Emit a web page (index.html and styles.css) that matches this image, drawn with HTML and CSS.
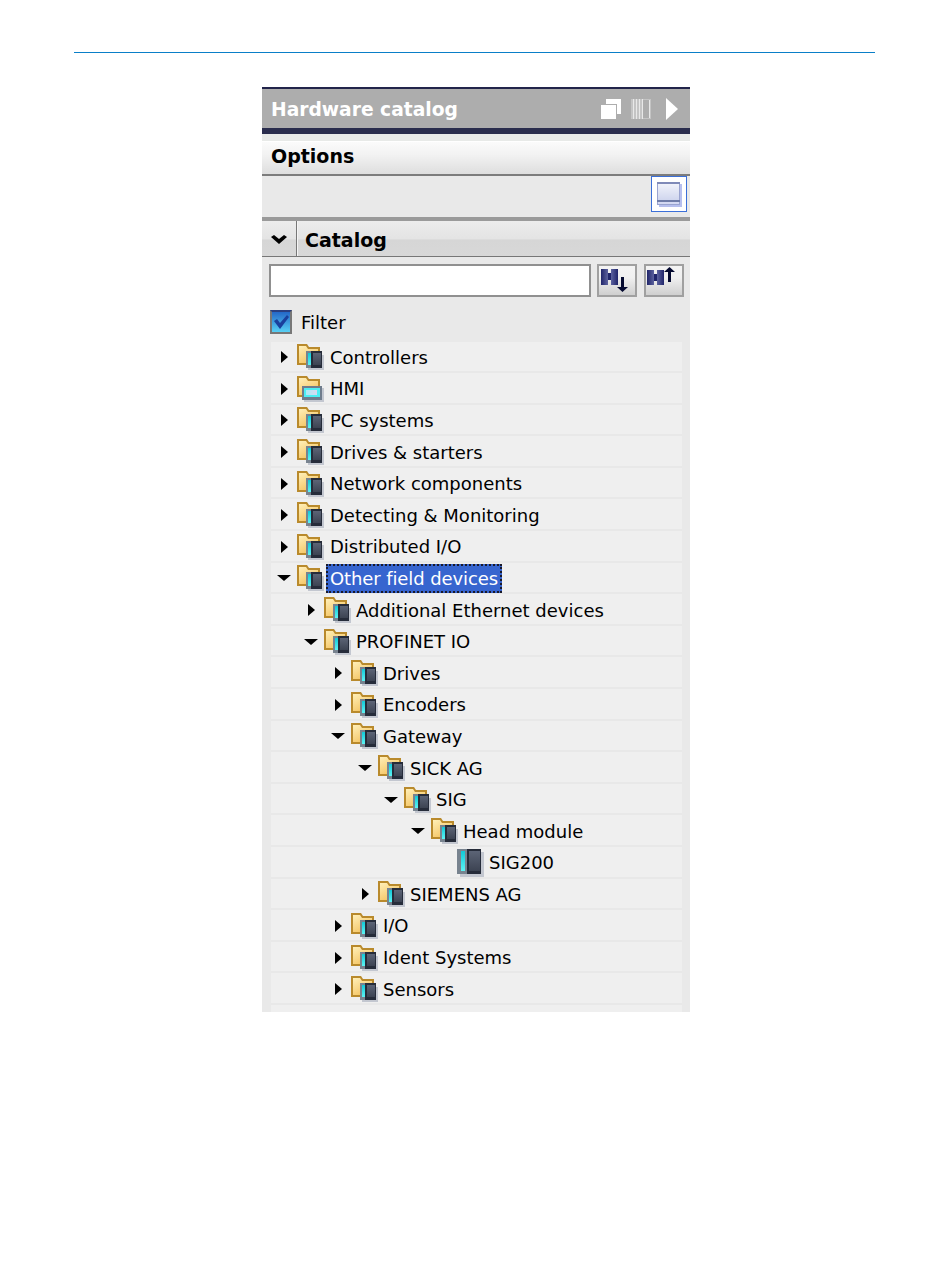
FILE: index.html
```html
<!DOCTYPE html>
<html>
  <head>
    <meta charset="utf-8">
    <title>Hardware catalog</title>
    <link rel="stylesheet" href="styles.css">
  </head>
  <body>
    <!-- Shared icons -->
    <svg class="defs" xmlns="http://www.w3.org/2000/svg">
      <defs>
        <linearGradient id="folderfill" x1="0" y1="0" x2="0.6" y2="1">
          <stop offset="0" stop-color="#ffefb8"/>
          <stop offset="1" stop-color="#f4c462"/>
        </linearGradient>
        <linearGradient id="cyan" x1="0" y1="0" x2="0" y2="1">
          <stop offset="0" stop-color="#12c8d8"/>
          <stop offset="1" stop-color="#5cf4f4"/>
        </linearGradient>
        <linearGradient id="module" x1="0" y1="0" x2="0" y2="1">
          <stop offset="0" stop-color="#5c6476"/>
          <stop offset="1" stop-color="#3c4352"/>
        </linearGradient>
        <linearGradient id="screen" x1="0" y1="0" x2="1" y2="0">
          <stop offset="0" stop-color="#a8ecf8"/>
          <stop offset="1" stop-color="#d8d8f0"/>
        </linearGradient>
        <linearGradient id="pane" x1="0" y1="0" x2="0" y2="1">
          <stop offset="0" stop-color="#f0f2fa"/>
          <stop offset="1" stop-color="#d0d6ee"/>
        </linearGradient>
        <linearGradient id="binoc" x1="0" y1="0" x2="1" y2="0">
          <stop offset="0" stop-color="#20256a"/>
          <stop offset="0.5" stop-color="#6a70aa"/>
          <stop offset="1" stop-color="#20256a"/>
        </linearGradient>
        <symbol id="arrow-right" viewBox="0 0 14 14">
          <path d="M4 1l7 6-7 6z" fill="#000"/>
        </symbol>
        <symbol id="arrow-down" viewBox="0 0 14 14">
          <path d="M0 4h14l-7 6z" fill="#000"/>
        </symbol>
        <symbol id="folder" viewBox="0 0 27 26">
          <path d="M0 0h10l2 3h11v16H9v2H0z" fill="#b98a2c"/>
          <path d="M2 2h7l2 3h10v14H2z" fill="url(#folderfill)"/>
        </symbol>
        <symbol id="folder-device" viewBox="0 0 27 26">
          <use href="#folder"/>
          <path d="M11 11h16v15H11z" fill="#c3c7d0"/>
          <path d="M9 7h6v17H9z" fill="#78838f"/>
          <path d="M11 9h3v12h-3z" fill="url(#cyan)"/>
          <path d="M14 7h11v17H14z" fill="#262c3a"/>
          <path d="M16 9h8v12h-8z" fill="url(#module)"/>
        </symbol>
        <symbol id="folder-hmi" viewBox="0 0 27 26">
          <use href="#folder"/>
          <path d="M7 12h20v14H7z" fill="#c3c7d0"/>
          <path d="M5 10h20v14H5z" fill="#6f7c8c"/>
          <path d="M7 12h16v9H7z" fill="#4ceef4"/>
          <path d="M9 14h11v5H9z" fill="url(#screen)"/>
        </symbol>
        <symbol id="device" viewBox="0 0 27 28">
          <path d="M3 3h24v25H3z" fill="#c3c7d0"/>
          <path d="M0 0h10v25H0z" fill="#78838f"/>
          <path d="M4 2h4v20H4z" fill="url(#cyan)"/>
          <path d="M10 0h14v25H10z" fill="#262c3a"/>
          <path d="M12 2h11v20H12z" fill="url(#module)"/>
        </symbol>
      </defs>
    </svg>

    <div class="topline"></div>

    <div class="panel">
      <div class="titlebar">
        <span class="title">Hardware catalog</span>
        <svg class="ticon" width="20" height="20" viewBox="0 0 20 20">
          <path d="M5 0h15v15h-4V5H5z" fill="#fff"/>
          <path d="M0 6h15v14H0z" fill="#fff"/>
        </svg>
        <svg class="ticon" width="20" height="20" viewBox="0 0 20 20">
          <path d="M0 0h20v20H0z" fill="#c4c4c4"/>
          <path d="M2 0h1v20H2zM5 0h1v20H5zM8 0h1v20H8zM11 0h1v20h-1zM18 1h1v18h-1z" fill="#e8e8e8"/>
          <path d="M12 1h6v18h-6z" fill="#adadad"/>
        </svg>
        <svg class="tarrow" width="12" height="22" viewBox="0 0 12 22">
          <path d="M0 0l12 11L0 22z" fill="#fff"/>
        </svg>
      </div>
      <div class="strip"></div>

      <div class="section-head">Options</div>
      <div class="toolbar">
        <div class="toolbtn">
          <svg width="25" height="25" viewBox="0 0 25 25">
            <path d="M2 2h23v23H2z" fill="#b6bfee"/>
            <path d="M0 0h23v23H0z" fill="#9aa4d0"/>
            <path d="M1 2h21v16H1z" fill="url(#pane)"/>
            <path d="M0 0h23v2H0z" fill="#7f8ab8"/>
            <path d="M0 18h23v2H0z" fill="#6f7ca8"/>
            <path d="M1 20h21v2H1z" fill="#d4d9f2"/>
          </svg>
        </div>
      </div>

      <div class="catalog-head">
        <div class="collapse">
          <svg width="16" height="9" viewBox="0 0 16 9">
            <path d="M0 2l3-2 5 4 5-4 3 2-8 7z" fill="#000"/>
          </svg>
        </div>
        <span class="catalog-title">Catalog</span>
      </div>

      <div class="search">
        <div class="search-input"></div>
        <div class="search-btn">
          <svg width="36" height="29" viewBox="0 0 36 29">
            <path d="M2 3h7v16H2zM12 3h7v16h-7z" fill="url(#binoc)"/>
            <path d="M9 7h3v7H9z" fill="#20256a"/>
            <path d="M22 11h3v10h4l-5.500 5-5.500-5h4z" fill="#050a30"/>
          </svg>
        </div>
        <div class="search-btn">
          <svg width="36" height="29" viewBox="0 0 36 29">
            <path d="M1 4h7v15H1zM11 4h7v15h-7z" fill="url(#binoc)"/>
            <path d="M8 8h3v7H8z" fill="#20256a"/>
            <path d="M22 16h3V6h4l-5.500-5-5.500 5h4z" fill="#050a30"/>
          </svg>
        </div>
      </div>

      <div class="filter">
        <div class="checkbox">
          <svg width="16" height="14" viewBox="0 0 16 14">
            <path d="M1 6l3-2 3 4 7-8 2 2-9 12z" fill="#1a3f9c"/>
          </svg>
        </div>
        <span>Filter</span>
      </div>

      <div class="tree">
        <div class="row d0"><svg class="arrow"><use href="#arrow-right"/></svg><svg class="icon"><use href="#folder-device"/></svg><span class="label">Controllers</span></div>
        <div class="row d0"><svg class="arrow"><use href="#arrow-right"/></svg><svg class="icon"><use href="#folder-hmi"/></svg><span class="label">HMI</span></div>
        <div class="row d0"><svg class="arrow"><use href="#arrow-right"/></svg><svg class="icon"><use href="#folder-device"/></svg><span class="label">PC systems</span></div>
        <div class="row d0"><svg class="arrow"><use href="#arrow-right"/></svg><svg class="icon"><use href="#folder-device"/></svg><span class="label">Drives &amp; starters</span></div>
        <div class="row d0"><svg class="arrow"><use href="#arrow-right"/></svg><svg class="icon"><use href="#folder-device"/></svg><span class="label">Network components</span></div>
        <div class="row d0"><svg class="arrow"><use href="#arrow-right"/></svg><svg class="icon"><use href="#folder-device"/></svg><span class="label">Detecting &amp; Monitoring</span></div>
        <div class="row d0"><svg class="arrow"><use href="#arrow-right"/></svg><svg class="icon"><use href="#folder-device"/></svg><span class="label">Distributed I/O</span></div>
        <div class="row d0"><svg class="arrow"><use href="#arrow-down"/></svg><svg class="icon"><use href="#folder-device"/></svg><span class="label selected">Other field devices</span></div>
        <div class="row d1"><svg class="arrow"><use href="#arrow-right"/></svg><svg class="icon"><use href="#folder-device"/></svg><span class="label">Additional Ethernet devices</span></div>
        <div class="row d1"><svg class="arrow"><use href="#arrow-down"/></svg><svg class="icon"><use href="#folder-device"/></svg><span class="label">PROFINET IO</span></div>
        <div class="row d2"><svg class="arrow"><use href="#arrow-right"/></svg><svg class="icon"><use href="#folder-device"/></svg><span class="label">Drives</span></div>
        <div class="row d2"><svg class="arrow"><use href="#arrow-right"/></svg><svg class="icon"><use href="#folder-device"/></svg><span class="label">Encoders</span></div>
        <div class="row d2"><svg class="arrow"><use href="#arrow-down"/></svg><svg class="icon"><use href="#folder-device"/></svg><span class="label">Gateway</span></div>
        <div class="row d3"><svg class="arrow"><use href="#arrow-down"/></svg><svg class="icon"><use href="#folder-device"/></svg><span class="label">SICK AG</span></div>
        <div class="row d4"><svg class="arrow"><use href="#arrow-down"/></svg><svg class="icon"><use href="#folder-device"/></svg><span class="label">SIG</span></div>
        <div class="row d5"><svg class="arrow"><use href="#arrow-down"/></svg><svg class="icon"><use href="#folder-device"/></svg><span class="label">Head module</span></div>
        <div class="row d6"><svg class="icon"><use href="#device"/></svg><span class="label">SIG200</span></div>
        <div class="row d3"><svg class="arrow"><use href="#arrow-right"/></svg><svg class="icon"><use href="#folder-device"/></svg><span class="label">SIEMENS AG</span></div>
        <div class="row d2"><svg class="arrow"><use href="#arrow-right"/></svg><svg class="icon"><use href="#folder-device"/></svg><span class="label">I/O</span></div>
        <div class="row d2"><svg class="arrow"><use href="#arrow-right"/></svg><svg class="icon"><use href="#folder-device"/></svg><span class="label">Ident Systems</span></div>
        <div class="row d2"><svg class="arrow"><use href="#arrow-right"/></svg><svg class="icon"><use href="#folder-device"/></svg><span class="label">Sensors</span></div>
      </div>
    </div>
  </body>
</html>
```
FILE: styles.css
```css
body {
  margin: 0;
  background: #fff;
  font-family: "DejaVu Sans", sans-serif;
  font-size: 18px;
  color: #000;
}

.defs {
  display: block;
  width: 0;
  height: 0;
}

.topline {
  height: 1px;
  margin: 52px 75px 0 74px;
  background: #0a7fc8;
}

.panel {
  width: 428px;
  height: 925px;
  margin: 34px 0 0 262px;
  background: #e9e9e9;
  display: flex;
  flex-direction: column;
}

/* Title bar */
.titlebar {
  height: 39px;
  border-top: 2px solid #22244a;
  border-bottom: 6px solid #2a2d4d;
  background: #adadad;
  display: flex;
  align-items: center;
  padding: 0 12px 0 9px;
}
.title {
  flex: 1;
  padding-top: 2px;
  font-size: 18.7px;
  font-weight: bold;
  color: #fff;
}
.ticon {
  margin-right: 10px;
}
.tarrow {
  margin-left: 5px;
}

.strip {
  height: 7px;
  background: #e8eae8;
}

/* Section headers */
.section-head {
  height: 33px;
  box-sizing: border-box;
  padding-left: 9px;
  line-height: 28px;
  font-size: 19px;
  font-weight: bold;
  border-top: 1px solid #fff;
  background: linear-gradient(#fbfbfb, #f2f2f2 40%, #dedede);
}

.toolbar {
  height: 41px;
  border-top: 2px solid #7c7c7c;
  border-bottom: 4px solid #9a9a9a;
  display: flex;
  justify-content: flex-end;
  padding-right: 3px;
}
.toolbtn {
  width: 36px;
  height: 36px;
  box-sizing: border-box;
  border: 1px solid #3b6fd8;
  background: #fff;
  display: flex;
  align-items: center;
  justify-content: center;
}

.catalog-head {
  height: 35px;
  border-bottom: 1px solid #777;
  background: linear-gradient(#ececec, #e4e4e4 50%, #d6d6d6 55%, #d8d8d8);
  display: flex;
  align-items: center;
}
.collapse {
  width: 35px;
  height: 100%;
  box-sizing: border-box;
  padding-top: 2px;
  border-right: 1px solid #777;
  box-shadow: 1px 0 0 #f4f4f4;
  display: flex;
  align-items: center;
  justify-content: center;
}
.catalog-title {
  margin: 2px 0 0 8px;
  font-size: 19px;
  font-weight: bold;
}

/* Search */
.search {
  display: flex;
  gap: 7px;
  margin: 7px 6px 0 7px;
  height: 33px;
}
.search-input {
  flex: 1;
  margin-right: -1px;
  box-sizing: border-box;
  border: 2px solid #909090;
  background: #fff;
}
.search-btn {
  width: 40px;
  box-sizing: border-box;
  border: 2px solid #a0a0a0;
  background: linear-gradient(#f4f4f4, #f0f0f0 40%, #cfcfcf);
  display: flex;
  align-items: center;
  justify-content: center;
}

.filter {
  display: flex;
  align-items: center;
  gap: 9px;
  height: 24px;
  margin: 13px 0 7.5px 8px;
}
.checkbox {
  width: 22px;
  height: 24px;
  box-sizing: border-box;
  border: 2px solid #777;
  border-top-color: #2a3f80;
  background: linear-gradient(#2468c8, #58d0f4);
  display: flex;
  align-items: center;
  justify-content: center;
}

/* Tree */
.tree {
  flex: 1;
  margin: 0 8px 0 9px;
  background: #efefef;
}
.row {
  height: 31.6px;
  box-sizing: border-box;
  padding-top: 2px;
  border-bottom: 2px solid #e8e8e8;
  display: flex;
  align-items: center;
}
.d0 { padding-left: 6px; }
.d1 { padding-left: 33px; }
.d2 { padding-left: 60px; }
.d3 { padding-left: 87px; }
.d4 { padding-left: 113px; }
.d5 { padding-left: 140px; }
.d6 { padding-left: 186px; }

.arrow {
  width: 14px;
  height: 14px;
  margin-right: 6px;
}
.icon {
  width: 27px;
  height: 26px;
}
.d6 .icon {
  height: 28px;
}
.label {
  margin-left: 1px;
  padding: 0 4px;
  line-height: 29px;
}
.d0 .label {
  margin-left: 2px;
}
.selected {
  background: #3765cf;
  color: #fff;
  letter-spacing: -0.1px;
  outline: 2px dotted #1a1a2a;
  outline-offset: -2px;
}
```
